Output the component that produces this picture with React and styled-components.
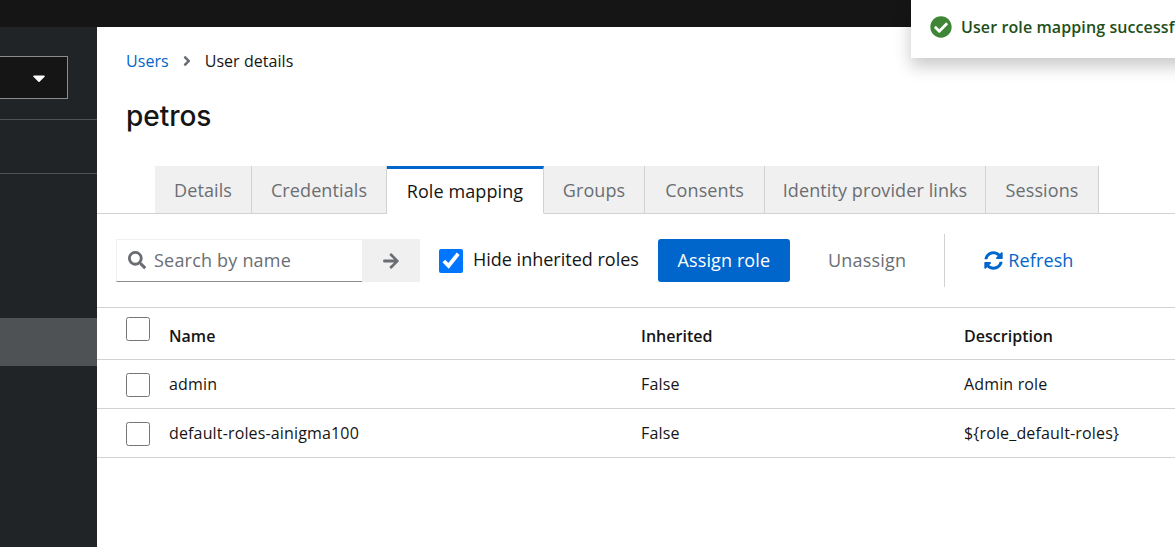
import React from 'react';
import styled, { createGlobalStyle } from 'styled-components';
import { FaSearch, FaArrowRight, FaSyncAlt, FaCheckCircle, FaCaretDown, FaAngleRight } from 'react-icons/fa';

const Global = createGlobalStyle`
  html, body { margin: 0; padding: 0; height: 100%; overflow: hidden; background: #fff; }
  body { font-family: 'Open Sans', 'Liberation Sans', sans-serif; color: #151515; }
  #root { height: 100%; }
`;

const Page = styled.div`
  position: relative;
  display: flex;
  flex-direction: column;
  width: 1175px;
  height: 547px;
  overflow: hidden;
`;

const TopBar = styled.div`
  height: 27px;
  flex: none;
  background: #151515;
`;

const Body = styled.div`
  display: flex;
  flex: 1;
  min-height: 0;
`;

const Sidebar = styled.aside`
  width: 97px;
  flex: none;
  display: flex;
  flex-direction: column;
  background: #212427;
`;

const RealmSelect = styled.div`
  height: 43px;
  margin: 29px 29px 20px 0;
  box-sizing: border-box;
  display: flex;
  align-items: center;
  justify-content: flex-end;
  padding-right: 18px;
  background: #151515;
  border: 1px solid #8a8d90;
  border-left: 0;
  color: #fff;
  font-size: 20px;
`;

const NavDivider = styled.div`
  height: 1px;
  background: #4f5255;
  margin-bottom: ${p => p.$gap}px;
`;

const NavItem = styled.div`
  height: 48px;
  background: #4f5255;
`;

const Main = styled.main`
  flex: 1;
  min-width: 0;
  display: flex;
  flex-direction: column;
`;

const Breadcrumb = styled.nav`
  display: flex;
  align-items: center;
  height: 24px;
  margin: 22px 0 0 29px;
  font-size: 16px;
`;

const Crumb = styled.span`
  color: ${p => (p.$link ? '#0066cc' : '#151515')};
  letter-spacing: 0.05px;
`;

const CrumbSep = styled.span`
  display: flex;
  margin: 0 10px;
  color: #6a6e73;
  font-size: 16px;
`;

const Title = styled.h1`
  margin: 24px 0 0 29px;
  font-family: Inter, 'Open Sans', sans-serif;
  font-size: 28px;
  line-height: 38px;
  font-weight: 500;
  letter-spacing: -0.05px;
  color: #151515;
`;

const Tabs = styled.div`
  display: flex;
  height: 48px;
  box-sizing: border-box;
  margin-top: 31px;
  padding-left: 58px;
  border-bottom: 1px solid #d2d2d2;
`;

const Tab = styled.div`
  width: ${p => p.$w}px;
  box-sizing: border-box;
  height: ${p => (p.$active ? '48px' : '47px')};
  display: flex;
  align-items: center;
  justify-content: center;
  font-size: 18px;
  letter-spacing: 0.1px;
  white-space: nowrap;
  color: ${p => (p.$active ? '#151515' : '#6a6e73')};
  background: ${p => (p.$active ? '#fff' : '#f0f0f0')};
  border-right: 1px solid #d2d2d2;
  border-top: ${p => (p.$active ? '3px solid #0066cc' : '0')};
  border-bottom: ${p => (p.$active ? '1px solid #fff' : '0')};
`;

const Toolbar = styled.div`
  display: flex;
  align-items: center;
  height: 93px;
  padding-left: 19px;
  border-bottom: 1px solid #d2d2d2;
`;

const SearchGroup = styled.div`
  display: flex;
  height: 43px;
  width: 304px;
  flex: none;
`;

const SearchBox = styled.div`
  flex: 1;
  box-sizing: border-box;
  display: flex;
  align-items: center;
  gap: 8px;
  padding: 0 0 1px 11px;
  border: 1px solid #f0f0f0;
  border-bottom: 1px solid #8a8d90;
  border-right: 0;
  color: #6a6e73;
  font-size: 18px;
  letter-spacing: 0.2px;
`;

const SearchGo = styled.div`
  width: 58px;
  display: flex;
  align-items: center;
  justify-content: center;
  background: #f0f0f0;
  color: #6a6e73;
  font-size: 18px;
`;

const CheckLabel = styled.label`
  display: flex;
  align-items: center;
  gap: 10px;
  margin-left: 19px;
  font-size: 18px;
  color: #151515;
  white-space: nowrap;
`;

const LabelText = styled.span`
  margin-bottom: 4px;
`;

// native boxes, the reference uses the browser's own checkbox
const CheckBox = styled.input.attrs({ type: 'checkbox' })`
  display: block;
  width: 24px;
  height: 24px;
  margin: 0;
`;

const PrimaryButton = styled.div`
  width: 132px;
  height: 43px;
  margin-left: 19px;
  padding-bottom: 1px;
  box-sizing: border-box;
  display: flex;
  align-items: center;
  justify-content: center;
  border-radius: 3px;
  background: #0066cc;
  color: #fff;
  font-size: 18px;
  letter-spacing: 0.1px;
`;

const PlainButton = styled.div`
  margin-left: 38px;
  padding-bottom: 1px;
  color: #6a6e73;
  font-size: 18px;
  letter-spacing: 0.2px;
`;

const ToolDivider = styled.div`
  width: 1px;
  height: 53px;
  margin-left: 38px;
  background: #d2d2d2;
`;

const RefreshButton = styled.div`
  display: flex;
  align-items: center;
  gap: 5px;
  margin-left: 39px;
  padding-bottom: 1px;
  color: #0066cc;
  font-size: 18px;
  letter-spacing: 0.15px;
  svg { font-size: 19px; }
`;

const Row = styled.div`
  display: grid;
  grid-template-columns: 72px 472px 323px 1fr;
  height: ${p => p.$h}px;
  box-sizing: border-box;
  border-bottom: 1px solid #d2d2d2;
  font-size: 16px;
  color: #151515;
`;

const Cell = styled.div`
  display: flex;
  align-items: center;
  white-space: nowrap;
  font-weight: ${p => (p.$head ? 600 : 400)};
  letter-spacing: ${p => (p.$head ? '0.03px' : '0.15px')};
  padding-top: ${p => (p.$head ? '4px' : '0')};
`;

const CheckCell = styled.div`
  display: flex;
  align-items: ${p => (p.$head ? 'flex-start' : 'center')};
  padding: ${p => (p.$head ? '9px' : '2px')} 0 0 29px;
`;

const Toast = styled.div`
  position: absolute;
  top: 0;
  left: 911px;
  width: 400px;
  height: 58px;
  display: flex;
  align-items: center;
  gap: 9px;
  padding: 0 0 5px 19px;
  box-sizing: border-box;
  background: #fff;
  box-shadow: 0 8px 16px rgba(3, 3, 3, 0.22);
  color: #1e4f18;
  font-size: 16px;
  font-weight: 600;
  letter-spacing: 0.1px;
  white-space: nowrap;
  svg { font-size: 22px; color: #3e8635; flex: none; }
`;

const roles = [
  { name: 'admin', inherited: 'False', description: 'Admin role' },
  { name: 'default-roles-ainigma100', inherited: 'False', description: '${role_default-roles}' },
];

const tabs = [
  ['Details', 97],
  ['Credentials', 135],
  ['Role mapping', 157, true],
  ['Groups', 101],
  ['Consents', 120],
  ['Identity provider links', 221],
  ['Sessions', 113],
];

export default function App() {
  return (
    <Page>
      <Global />
      <TopBar />
      <Body>
        <Sidebar>
          <RealmSelect><FaCaretDown /></RealmSelect>
          <NavDivider $gap={53} />
          <NavDivider $gap={144} />
          <NavItem />
        </Sidebar>
        <Main>
          <Breadcrumb>
            <Crumb $link>Users</Crumb>
            <CrumbSep><FaAngleRight /></CrumbSep>
            <Crumb>User details</Crumb>
          </Breadcrumb>
          <Title>petros</Title>
          <Tabs>
            {tabs.map(([label, w, active]) => (
              <Tab key={label} $w={w} $active={active}>{label}</Tab>
            ))}
          </Tabs>
          <Toolbar>
            <SearchGroup>
              <SearchBox><FaSearch />Search by name</SearchBox>
              <SearchGo><FaArrowRight /></SearchGo>
            </SearchGroup>
            <CheckLabel>
              <CheckBox defaultChecked />
              <LabelText>Hide inherited roles</LabelText>
            </CheckLabel>
            <PrimaryButton>Assign role</PrimaryButton>
            <PlainButton>Unassign</PlainButton>
            <ToolDivider />
            <RefreshButton><FaSyncAlt />Refresh</RefreshButton>
          </Toolbar>
          <Row $h={52}>
            <CheckCell $head><CheckBox /></CheckCell>
            <Cell $head>Name</Cell>
            <Cell $head>Inherited</Cell>
            <Cell $head>Description</Cell>
          </Row>
          {roles.map(role => (
            <Row key={role.name} $h={49}>
              <CheckCell><CheckBox /></CheckCell>
              <Cell>{role.name}</Cell>
              <Cell>{role.inherited}</Cell>
              <Cell>{role.description}</Cell>
            </Row>
          ))}
        </Main>
      </Body>
      <Toast><FaCheckCircle />User role mapping successfully updated</Toast>
    </Page>
  );
}
